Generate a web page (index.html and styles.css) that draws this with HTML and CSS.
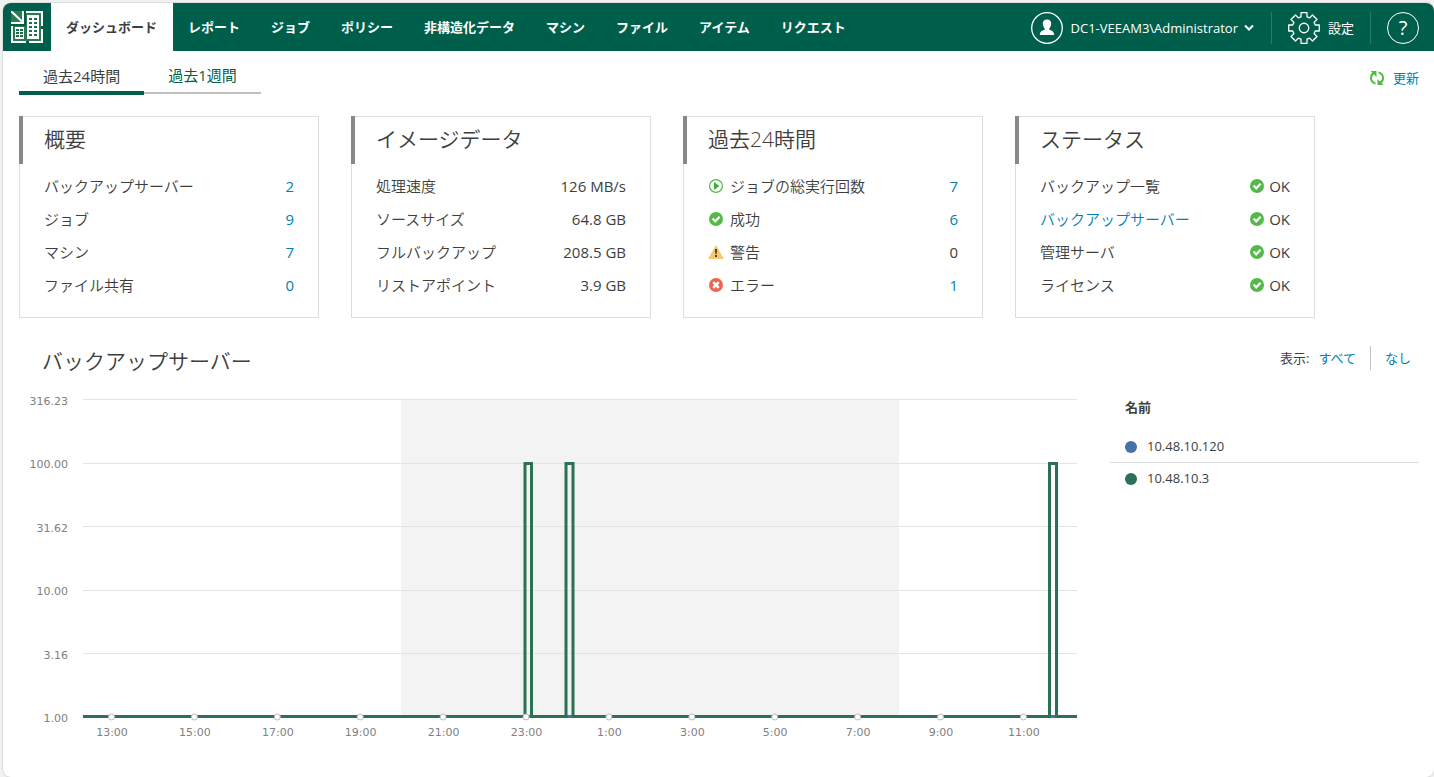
FILE: index.html
```html
<!DOCTYPE html>
<html lang="ja">
<head>
    <meta charset="UTF-8">
    <meta name="viewport" content="width=device-width, initial-scale=1.0">
    <title>ダッシュボード</title>
    <link rel="stylesheet" href="styles.css">
</head>
<body>

    <!-- Shared icons -->
    <svg class="sprite" aria-hidden="true">
        <symbol id="icon-ok" viewBox="0 0 14 14">
            <circle cx="7" cy="7" r="7" fill="#54b948"/>
            <path d="M3.6 6.6l2.6 2.7 4.4-4.6" fill="none" stroke="#fff" stroke-width="2.2"/>
        </symbol>
        <symbol id="icon-run" viewBox="0 0 14 14">
            <circle cx="7" cy="7" r="6.4" fill="#fff" stroke="#54b948" stroke-width="1.2"/>
            <path d="M5 3l5.4 4L5 11z" fill="#3fae35"/>
        </symbol>
        <symbol id="icon-warning" viewBox="0 0 16 14">
            <path d="M8 0l8 14H0z" fill="#f3c96f"/>
            <path d="M7 4h2v1.500l-.4 3.500H7.400L7 5.500zM7 10h2v2H7z" fill="#3e3e3e"/>
        </symbol>
        <symbol id="icon-error" viewBox="0 0 14 14">
            <circle cx="7" cy="7" r="7" fill="#ef6351"/>
            <path d="M4.200 4.200l5.600 5.600M9.800 4.200L4.200 9.800" stroke="#fff" stroke-width="2.600"/>
        </symbol>
    </svg>

    <div class="app">
        <header class="topbar">
            <a href="#" class="logo" aria-label="ホーム">
                <svg width="32" height="32" viewBox="0 0 32 32">
                    <path d="M0 0h13v13H0zM15 2h15v28H2V15h13z" fill="#2b7a52"/>
                    <path d="M0 0L11 10.500M0 12h12V0" fill="none" stroke="#fff" stroke-width="2"/>
                    <path d="M15 1h16v14M31 18v13H18M15 31H1V15" fill="none" stroke="#fff" stroke-width="2"/>
                    <path d="M16 4h12v24H16zM4 16h9v12H4z" fill="#fff"/>
                    <path d="M18 7h3v2h-3zM23 7h3v2h-3zM18 11h3v2h-3zM23 11h3v2h-3zM18 15h3v2h-3zM23 15h3v2h-3zM18 19h3v2h-3zM23 19h3v2h-3zM18 23h3v2h-3zM23 23h3v2h-3zM5 18h3v2H5zM9 18h3v2H9zM5 21h3v2H5zM9 21h3v2H9zM5 24h3v2H5zM9 24h3v2H9z" fill="#1c6d50"/>
                </svg>
            </a>
            <nav class="menu">
                <a href="#" class="active">ダッシュボード</a>
                <a href="#">レポート</a>
                <a href="#">ジョブ</a>
                <a href="#">ポリシー</a>
                <a href="#">非構造化データ</a>
                <a href="#">マシン</a>
                <a href="#">ファイル</a>
                <a href="#">アイテム</a>
                <a href="#">リクエスト</a>
            </nav>
            <div class="tools">
                <button type="button" class="user">
                    <svg width="32" height="32" viewBox="0 0 32 32">
                        <circle cx="16" cy="16" r="15.300" fill="none" stroke="#fff" stroke-width="1.300"/>
                        <path d="M16 7.500c3 0 4.400 2 4.200 4.600-.2 2.300-1.100 3.600-1.900 4.400v1.200c2.600.8 4.700 1.700 4.900 5.300H8.800c.2-3.600 2.300-4.500 4.900-5.300v-1.200c-.8-.8-1.700-2.100-1.900-4.400-.2-2.600 1.200-4.600 4.200-4.600z" fill="#fff"/>
                    </svg>
                    <span>DC1-VEEAM3\Administrator</span>
                    <svg class="chevron" width="10" height="8" viewBox="0 0 10 8">
                        <path d="M1 1.500l4 4 4-4" fill="none" stroke="#fff" stroke-width="2"/>
                    </svg>
                </button>
                <button type="button" class="settings">
                    <svg width="32" height="32" viewBox="0 0 32 32">
                        <path fill="none" stroke="#fff" stroke-width="1.300" stroke-linejoin="round" d="M13 .7h6v4.100l2.600 1.100 2.900-2.900 4.500 4.500-2.900 2.900 1.100 2.600h4.100v6h-4.100l-1.100 2.600 2.900 2.900-4.500 4.500-2.900-2.900-2.600 1.100v4.100h-6v-4.100l-2.600-1.100-2.900 2.900L3 24.500l2.900-2.900L4.800 19H.7v-6h4.100l1.100-2.600L3 7.500 7.500 3l2.900 2.900L13 4.800z"/>
                        <circle cx="16" cy="16" r="4.700" fill="none" stroke="#fff" stroke-width="1.400"/>
                    </svg>
                    <span>設定</span>
                </button>
                <button type="button" class="help" aria-label="ヘルプ">?</button>
            </div>
        </header>

        <main>
            <div class="period">
                <div class="tabs">
                    <a href="#" class="active">過去24時間</a>
                    <a href="#">過去1週間</a>
                </div>
                <button type="button" class="refresh">
                    <svg width="14" height="16" viewBox="0 0 14 16">
                        <path d="M5.500 13.600C2.500 12.600 1 10.600 1 8c0-2.400 1-4 2.800-5.200M8.500 2.400c3 1 4.500 3 4.500 5.600 0 2.400-1 4-2.800 5.200" fill="none" stroke="#54b948" stroke-width="2"/>
                        <path d="M.5 1h6v6zM13.500 15h-6V9z" fill="#54b948"/>
                    </svg>
                    <span>更新</span>
                </button>
            </div>

            <div class="cards">
                <section class="card">
                    <h2>概要</h2>
                    <table>
                        <tr><th>バックアップサーバー</th><td><a href="#">2</a></td></tr>
                        <tr><th>ジョブ</th><td><a href="#">9</a></td></tr>
                        <tr><th>マシン</th><td><a href="#">7</a></td></tr>
                        <tr><th>ファイル共有</th><td><a href="#">0</a></td></tr>
                    </table>
                </section>
                <section class="card">
                    <h2>イメージデータ</h2>
                    <table>
                        <tr><th>処理速度</th><td>126 MB/s</td></tr>
                        <tr><th>ソースサイズ</th><td>64.8 GB</td></tr>
                        <tr><th>フルバックアップ</th><td>208.5 GB</td></tr>
                        <tr><th>リストアポイント</th><td>3.9 GB</td></tr>
                    </table>
                </section>
                <section class="card">
                    <h2>過去24時間</h2>
                    <table>
                        <tr><th><svg class="icon"><use href="#icon-run"/></svg>ジョブの総実行回数</th><td><a href="#">7</a></td></tr>
                        <tr><th><svg class="icon"><use href="#icon-ok"/></svg>成功</th><td><a href="#">6</a></td></tr>
                        <tr><th><svg class="icon"><use href="#icon-warning"/></svg>警告</th><td>0</td></tr>
                        <tr><th><svg class="icon"><use href="#icon-error"/></svg>エラー</th><td><a href="#">1</a></td></tr>
                    </table>
                </section>
                <section class="card">
                    <h2>ステータス</h2>
                    <table>
                        <tr><th>バックアップ一覧</th><td><svg class="icon"><use href="#icon-ok"/></svg>OK</td></tr>
                        <tr><th><a href="#">バックアップサーバー</a></th><td><svg class="icon"><use href="#icon-ok"/></svg>OK</td></tr>
                        <tr><th>管理サーバ</th><td><svg class="icon"><use href="#icon-ok"/></svg>OK</td></tr>
                        <tr><th>ライセンス</th><td><svg class="icon"><use href="#icon-ok"/></svg>OK</td></tr>
                    </table>
                </section>
            </div>

            <section class="servers">
                <div class="servers-header">
                    <h2>バックアップサーバー</h2>
                    <div class="show">
                        <span>表示:</span>
                        <a href="#">すべて</a>
                        <a href="#">なし</a>
                    </div>
                </div>
                <div class="servers-body">
                    <svg class="chart" viewBox="0 0 1060 360" role="img" aria-label="バックアップサーバー">
                        <rect class="night" x="382" y="15" width="498" height="317"/>
                        <g id="grid"></g>
                        <path class="line blue" d="M64 331.500H1058"/>
                        <path class="line green" d="M64 331.500H506V78.500h6.500V331.500M511 331.500H547V78.500h7V331.500M553 331.500H1030.500V78.500h7V331.500M1036 331.500H1058"/>
                        <g id="ticks"></g>
                    </svg>
                    <table class="legend">
                        <thead>
                            <tr><th>名前</th></tr>
                        </thead>
                        <tbody>
                            <tr><td><span class="dot blue"></span>10.48.10.120</td></tr>
                            <tr><td><span class="dot green"></span>10.48.10.3</td></tr>
                        </tbody>
                    </table>
                </div>
            </section>
        </main>
    </div>

    <script src="chart.js"></script>
</body>
</html>
```
FILE: styles.css
```css
* {
    box-sizing: border-box;
}

body {
    margin: 0;
    padding: 3px 0 0 3px;
    background-color: #f2f2f2;
    color: #3e3e3e;
    font-family: "Open Sans", "Noto Sans CJK JP", sans-serif;
    font-size: 13px;
    line-height: 20px;
}

a {
    color: #007fb8;
    text-decoration: none;
}

button {
    padding: 0;
    border: none;
    background: none;
    color: inherit;
    font: inherit;
    cursor: pointer;
}

h2 {
    margin: 0;
    font-size: 21px;
    font-weight: 350;
    line-height: 32px;
}

.sprite {
    display: none;
}

.app {
    min-height: calc(100vh - 3px);
    background-color: #fff;
    border-radius: 8px;
    box-shadow: 0 0 2px rgba(0, 0, 0, 0.3);
    overflow: hidden;
}

/* Top bar */
.topbar {
    display: flex;
    height: 48px;
    background-color: #005f4b;
    color: #fff;
}

.logo {
    padding: 8px;
}

.logo svg {
    display: block;
}

.menu {
    display: flex;
}

.menu a {
    padding: 0 16px 0 15px;
    color: #fff;
    font-weight: bold;
    line-height: 48px;
    white-space: nowrap;
}

.menu a.active {
    background-color: #fff;
    color: #3e3e3e;
}

.tools {
    display: flex;
    align-items: center;
    margin-left: auto;
    padding: 2px 15px 0 0;
}

.tools button {
    display: flex;
    align-items: center;
    gap: 8px;
    height: 32px;
    white-space: nowrap;
}

.tools .user {
    padding-right: 17px;
}

.tools .chevron {
    margin-left: -2px;
}

.tools .settings {
    padding: 0 16px;
    border-left: 1px solid #2e7a69;
    border-right: 1px solid #2e7a69;
}

.tools .help {
    justify-content: center;
    width: 32px;
    margin-left: 16px;
    border: 1px solid #fff;
    border-radius: 50%;
    font-size: 20px;
}

/* Period tabs */
main {
    padding: 0 15px 0 16px;
}

.period {
    display: flex;
    justify-content: space-between;
    height: 44px;
}

.tabs {
    display: flex;
    align-items: flex-start;
    font-size: 15px;
}

.tabs a {
    height: 43px;
    padding: 0 24px;
    border-bottom: 2px solid #c0c0c0;
    color: #005f4b;
    line-height: 48px;
}

.tabs a.active {
    height: 44px;
    border-bottom: 4px solid #005f4b;
    color: #3e3e3e;
    line-height: 50px;
}

.refresh {
    display: flex;
    align-items: center;
    gap: 9px;
    padding-top: 10px;
    color: #007fb8;
}

/* Summary cards */
.cards {
    display: flex;
    flex-wrap: wrap;
    gap: 32px;
    margin-top: 21px;
}

.card {
    position: relative;
    width: 300px;
    padding: 6px 24px 16px;
    border: 1px solid #dedede;
    font-size: 15px;
}

.card::before {
    content: "";
    position: absolute;
    top: -1px;
    left: -1px;
    width: 4px;
    height: 48px;
    background-color: #888;
}

.card table {
    width: 100%;
    margin-top: 14px;
    border-collapse: collapse;
}

.card th,
.card td {
    height: 33px;
    padding: 0;
    font-weight: 350;
    text-align: left;
    white-space: nowrap;
}

.card td {
    font-weight: normal;
    text-align: right;
}

.icon {
    width: 16px;
    height: 14px;
    margin-right: 6px;
    vertical-align: -1px;
}

.card td .icon {
    margin-right: 4px;
}

/* Backup servers */
.servers-header {
    display: flex;
    justify-content: space-between;
    margin-top: 24px;
    padding: 4px 8px 0 23px;
}

.servers-header h2 {
    line-height: 30px;
}

.show {
    display: flex;
    align-items: center;
    height: 24px;
}

.show a {
    margin-left: 9px;
}

.show a + a {
    margin-left: 14px;
    padding-left: 14px;
    border-left: 1px solid #c0c0c0;
    line-height: 24px;
}

.servers-body {
    display: grid;
    grid-template-columns: 1fr 309px;
    align-items: start;
    gap: 31px;
    margin-top: 9px;
}

.chart {
    display: block;
    width: 100%;
}

.chart .night {
    fill: #f3f3f3;
}

.chart .grid {
    stroke: #e3e3e3;
}

.chart .line {
    fill: none;
    stroke-width: 3;
}

.chart .line.blue {
    stroke: #4572a7;
}

.chart .line.green {
    stroke: #2b7153;
}

.chart .tick {
    fill: #fff;
    stroke: #bbb;
}

.chart text {
    fill: #808080;
    font-family: "DejaVu Sans", sans-serif;
    font-size: 11px;
}

.chart .y-label {
    text-anchor: end;
}

.chart .x-label {
    text-anchor: middle;
}

.legend {
    width: 100%;
    margin-top: 2px;
    border-collapse: collapse;
}

.legend th,
.legend td {
    height: 31px;
    padding: 0 15px;
    text-align: left;
}

.legend th {
    height: 44px;
    padding-bottom: 4px;
}

.legend tbody tr + tr td {
    border-top: 1px solid #dedede;
}

.dot {
    display: inline-block;
    width: 12px;
    height: 12px;
    margin-right: 10px;
    border-radius: 50%;
    vertical-align: -2px;
}

.dot.blue {
    background-color: #4572a7;
}

.dot.green {
    background-color: #2b7153;
}
```
FILE: chart.js
```js
const levels = ['316.23', '100.00', '31.62', '10.00', '3.16', '1.00'];
const hours = ['13:00', '15:00', '17:00', '19:00', '21:00', '23:00', '1:00', '3:00', '5:00', '7:00', '9:00', '11:00'];

let grid = '';
levels.forEach((level, i) => {
    const y = Math.round(14 + i * 63.5) + 0.5;
    if (i < levels.length - 1) {
        grid += `<path class="grid" d="M64 ${y}H1058"/>`;
    }
    grid += `<text class="y-label" x="49" y="${Math.floor(20 + i * 63.5)}">${level}</text>`;
});
document.getElementById('grid').innerHTML = grid;

let ticks = '';
hours.forEach((hour, i) => {
    const x = 92.5 + i * 82.9;
    ticks += `<circle class="tick" cx="${x}" cy="332" r="3"/>`;
    ticks += `<text class="x-label" x="${x + 0.5}" y="351">${hour}</text>`;
});
document.getElementById('ticks').innerHTML = ticks;
```
